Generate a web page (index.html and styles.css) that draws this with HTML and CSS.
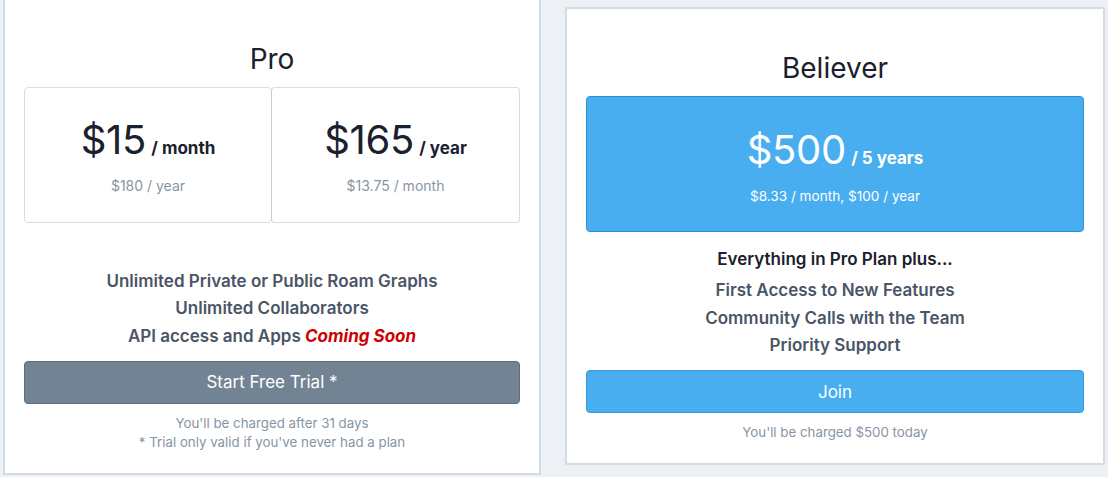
FILE: index.html
```html
<!DOCTYPE html>
<html lang="en">
<head>
<meta charset="utf-8">
<title>Plans</title>
<link rel="stylesheet" href="styles.css">
</head>
<body>
<div class="pricing">
  <section class="plan plan-pro">
    <h2 class="plan-title">Pro</h2>
    <div class="options">
      <div class="option">
        <div class="price"><span class="amount">$15</span> <span class="period">/ month</span></div>
        <div class="sub">$180 / year</div>
      </div>
      <div class="option option-second">
        <div class="price"><span class="amount">$165</span> <span class="period">/ year</span></div>
        <div class="sub">$13.75 / month</div>
      </div>
    </div>
    <div class="lead lead-empty"></div>
    <ul class="features">
      <li>Unlimited Private or Public Roam Graphs</li>
      <li>Unlimited Collaborators</li>
      <li>API access and Apps <em class="soon">Coming Soon</em></li>
    </ul>
    <button class="btn btn-gray">Start Free Trial *</button>
    <div class="notes">
      <p>You'll be charged after 31 days</p>
      <p>* Trial only valid if you've never had a plan</p>
    </div>
  </section>
  <section class="plan plan-believer">
    <h2 class="plan-title">Believer</h2>
    <div class="options">
      <div class="option option-blue">
        <div class="price"><span class="amount">$500</span> <span class="period">/ 5 years</span></div>
        <div class="sub">$8.33 / month, $100 / year</div>
      </div>
    </div>
    <div class="lead">Everything in Pro Plan plus...</div>
    <ul class="features">
      <li>First Access to New Features</li>
      <li>Community Calls with the Team</li>
      <li>Priority Support</li>
    </ul>
    <button class="btn btn-blue">Join</button>
    <div class="notes">
      <p>You'll be charged $500 today</p>
    </div>
  </section>
</div>
</body>
</html>
```
FILE: styles.css
```css
* { box-sizing: border-box; }
html, body {
  margin: 0;
  padding: 0;
  background: #edf1f5;
  font-family: Inter, "Noto Sans", "Liberation Sans", sans-serif;
  height: 477px;
  overflow: hidden;
}
.pricing {
  display: flex;
  align-items: center;
  gap: 24px;
  height: 472px;
  padding-left: 3px;
}
.plan {
  background: #fff;
  border: 2px solid #d3dce4;
  padding: 41px 19px 20px;
  display: flex;
  flex-direction: column;
  text-align: center;
  flex: none;
}
.plan-pro { width: 538px; }
.plan-believer { width: 540px; }
.plan-title {
  margin: 0 0 10px;
  font-size: 28px;
  line-height: 36px;
  font-weight: 400;
  color: #1a202c;
}
.options {
  display: grid;
  grid-auto-flow: column;
  grid-auto-columns: 1fr;
}
.option {
  height: 136px;
  border: 1px solid #d6dee6;
  border-radius: 4px;
  display: flex;
  flex-direction: column;
  justify-content: center;
  align-items: center;
  color: #1a202c;
  padding-top: 3px;
}
.option-second { border-left: 1px solid #c4ced8; margin-left: -1px; }
.option-blue {
  background: #49aeef;
  border-color: #2d91d4;
  color: #fff;
}
.price {
  font-size: 40px;
  line-height: 48px;
  white-space: nowrap;
  word-spacing: -6px;
}
.amount {
  font-weight: 400;
  letter-spacing: -0.3px;
  word-spacing: normal;
}
.period {
  font-size: 17px;
  font-weight: 700;
  word-spacing: normal;
}
.sub {
  margin-top: 4px;
  font-size: 14px;
  line-height: 20px;
  color: #8795a3;
}
.option-blue .sub { color: #fff; font-size: 13.6px; }
.lead {
  margin-top: 13px;
  margin-bottom: 4px;
  height: 28px;
  font-size: 17px;
  line-height: 28px;
  font-weight: 600;
  color: #1a202c;
}
.features {
  list-style: none;
  margin: 0;
  padding: 0;
  font-size: 17px;
  line-height: 27.5px;
  font-weight: 600;
  color: #4a5566;
}
.soon {
  color: #cc0000;
  font-style: italic;
  font-weight: 700;
}
.btn {
  margin-top: 10.5px;
  height: 43px;
  border-radius: 4px;
  font-family: inherit;
  font-size: 17px;
  color: #fff;
  cursor: pointer;
}
.btn-gray {
  background: #728493;
  border: 1px solid #5e6e7c;
}
.btn-blue {
  background: #49aeef;
  border: 1px solid #3597dc;
}
.notes {
  margin-top: 10px;
  font-size: 13.3px;
  line-height: 19.5px;
  color: #8795a3;
}
.notes p { margin: 0; }
```
